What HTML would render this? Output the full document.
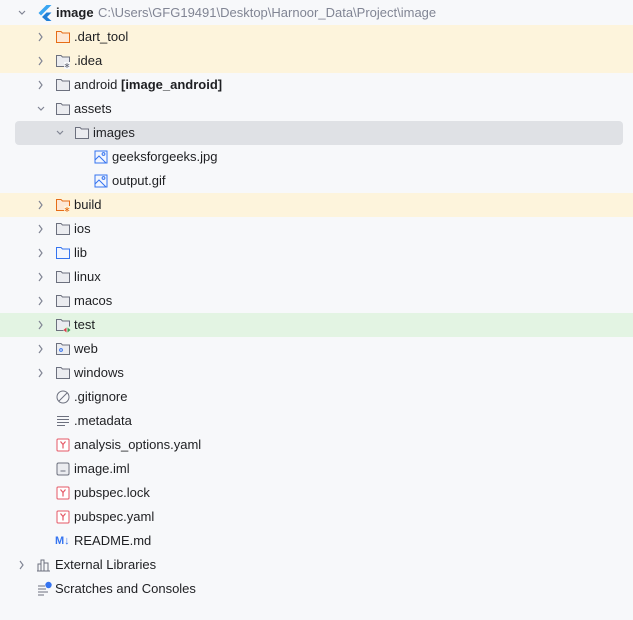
<!DOCTYPE html><html><head><style>
body{margin:0;width:633px;height:620px;background:#f7f8fa;font-family:"Liberation Sans",sans-serif;font-size:13px;color:#1e1f22;position:relative;overflow:hidden}
.r{position:absolute;left:0;width:633px;height:24px;line-height:24px;white-space:nowrap}
.r span.t{position:absolute;top:0}
.ch{position:absolute;top:7px;width:10px;height:10px}
.ic{position:absolute;top:4px;width:17px;height:16px}
.y{background:#fdf4dc}.g{background:#e3f4e3}
.sel{position:absolute;left:15px;top:121px;width:608px;height:24px;background:#dfe1e5;border-radius:4px}
</style></head><body>
<div class="r y" style="top:25px;height:48px"></div>
<div class="r y" style="top:193px"></div>
<div class="r g" style="top:313px"></div>
<div class="sel"></div>
<svg width="0" height="0" style="position:absolute"><defs>
<g id="cd"><path d="M2 3l3 3 3-3" fill="none" stroke="#818594" stroke-width="1.2"/></g>
<g id="cr"><path d="M3 1l3 4-3 4" fill="none" stroke="#818594" stroke-width="1.2"/></g>
<g id="fd"><path d="M1.5 2.5h4.5l1.5 1.5h7v9.5h-13z" fill="#ebecf0" stroke="#6c707e" stroke-width="1"/></g>
<g id="fo"><path d="M1.5 2.5h4.5l1.5 1.5h7v9.5h-13z" fill="#fde8d6" stroke="#e66d17" stroke-width="1"/></g>
<g id="fb"><path d="M1.5 2.5h4.5l1.5 1.5h7v9.5h-13z" fill="#f3f6fd" stroke="#3574f0" stroke-width="1"/></g>
<g id="img"><rect x="2" y="2" width="12" height="12" fill="#f3f6fd" stroke="#3574f0"/><circle cx="10.5" cy="5" r="1.4" fill="none" stroke="#3574f0"/><path d="M2 11l4-4 7 7" fill="none" stroke="#3574f0"/></g>
<g id="yml"><rect x="2" y="2" width="12" height="12" rx="1" fill="#fff" stroke="#e55765"/><path d="M5.5 4.5l2.5 3 2.5-3M8 7.5v4" fill="none" stroke="#e55765" stroke-width="1.2"/></g>
</defs></svg>

<div class="r" style="top:1px"><svg class="ch" style="left:17px" viewBox="0 0 10 10"><use href="#cd"/></svg>
<svg class="ic" style="left:36px;top:4px" viewBox="0 0 16 16"><path d="M10 0L2 8l2.5 2.5L15 0z" fill="#3aa6f2"/><path d="M10 7.5l-4.5 4.5 4.5 4h5l-4.5-4 4.5-4.5z" fill="#1f7ed6"/></svg>
<span class="t" style="left:56px;font-weight:bold">image</span><span class="t" style="left:98px;color:#818594">C:\Users\GFG19491\Desktop\Harnoor_Data\Project\image</span></div>

<div class="r" style="top:25px"><svg class="ch" style="left:36px" viewBox="0 0 10 10"><use href="#cr"/></svg><svg class="ic" style="left:55px" viewBox="0 0 17 16"><use href="#fo"/></svg><span class="t" style="left:74px">.dart_tool</span></div>
<div class="r" style="top:49px"><svg class="ch" style="left:36px" viewBox="0 0 10 10"><use href="#cr"/></svg><svg class="ic" style="left:55px" viewBox="0 0 17 16"><use href="#fd"/><rect x="9" y="9" width="6" height="7" fill="#f7f8fa"/><path d="M12 10v5M9.8 11.2l4.4 2.6M9.8 13.8l4.4-2.6" stroke="#6c707e" stroke-width=".8"/></svg><span class="t" style="left:74px">.idea</span></div>
<div class="r" style="top:73px"><svg class="ch" style="left:36px" viewBox="0 0 10 10"><use href="#cr"/></svg><svg class="ic" style="left:55px" viewBox="0 0 17 16"><use href="#fd"/></svg><span class="t" style="left:74px">android <b>[image_android]</b></span></div>
<div class="r" style="top:97px"><svg class="ch" style="left:36px" viewBox="0 0 10 10"><use href="#cd"/></svg><svg class="ic" style="left:55px" viewBox="0 0 17 16"><use href="#fd"/></svg><span class="t" style="left:74px">assets</span></div>
<div class="r" style="top:121px"><svg class="ch" style="left:55px" viewBox="0 0 10 10"><use href="#cd"/></svg><svg class="ic" style="left:74px" viewBox="0 0 17 16"><use href="#fd"/></svg><span class="t" style="left:93px">images</span></div>
<div class="r" style="top:145px"><svg class="ic" style="left:93px" viewBox="0 0 17 16"><use href="#img"/></svg><span class="t" style="left:112px">geeksforgeeks.jpg</span></div>
<div class="r" style="top:169px"><svg class="ic" style="left:93px" viewBox="0 0 17 16"><use href="#img"/></svg><span class="t" style="left:112px">output.gif</span></div>
<div class="r" style="top:193px"><svg class="ch" style="left:36px" viewBox="0 0 10 10"><use href="#cr"/></svg><svg class="ic" style="left:55px" viewBox="0 0 17 16"><use href="#fo"/><rect x="9" y="9" width="6" height="7" fill="#fdf4dc"/><path d="M12 10v5M9.8 11.2l4.4 2.6M9.8 13.8l4.4-2.6" stroke="#e66d17" stroke-width=".8"/></svg><span class="t" style="left:74px">build</span></div>
<div class="r" style="top:217px"><svg class="ch" style="left:36px" viewBox="0 0 10 10"><use href="#cr"/></svg><svg class="ic" style="left:55px" viewBox="0 0 17 16"><use href="#fd"/></svg><span class="t" style="left:74px">ios</span></div>
<div class="r" style="top:241px"><svg class="ch" style="left:36px" viewBox="0 0 10 10"><use href="#cr"/></svg><svg class="ic" style="left:55px" viewBox="0 0 17 16"><use href="#fb"/></svg><span class="t" style="left:74px">lib</span></div>
<div class="r" style="top:265px"><svg class="ch" style="left:36px" viewBox="0 0 10 10"><use href="#cr"/></svg><svg class="ic" style="left:55px" viewBox="0 0 17 16"><use href="#fd"/></svg><span class="t" style="left:74px">linux</span></div>
<div class="r" style="top:289px"><svg class="ch" style="left:36px" viewBox="0 0 10 10"><use href="#cr"/></svg><svg class="ic" style="left:55px" viewBox="0 0 17 16"><use href="#fd"/></svg><span class="t" style="left:74px">macos</span></div>
<div class="r" style="top:313px"><svg class="ch" style="left:36px" viewBox="0 0 10 10"><use href="#cr"/></svg><svg class="ic" style="left:55px" viewBox="0 0 17 16"><use href="#fd"/><rect x="8.5" y="9.5" width="7" height="6" fill="#e3f4e3"/><path d="M11.5 10.5l-3 2.5 3 2.5z" fill="#db3b4b"/><path d="M12.5 10.5l3 2.5-3 2.5z" fill="#3e9c52"/></svg><span class="t" style="left:74px">test</span></div>
<div class="r" style="top:337px"><svg class="ch" style="left:36px" viewBox="0 0 10 10"><use href="#cr"/></svg><svg class="ic" style="left:55px" viewBox="0 0 17 16"><use href="#fd"/><circle cx="6" cy="9" r="1.4" fill="none" stroke="#3574f0"/></svg><span class="t" style="left:74px">web</span></div>
<div class="r" style="top:361px"><svg class="ch" style="left:36px" viewBox="0 0 10 10"><use href="#cr"/></svg><svg class="ic" style="left:55px" viewBox="0 0 17 16"><use href="#fd"/></svg><span class="t" style="left:74px">windows</span></div>
<div class="r" style="top:385px"><svg class="ic" style="left:55px" viewBox="0 0 17 16"><circle cx="8" cy="8" r="6" fill="none" stroke="#6c707e"/><path d="M4 12l8-8" stroke="#6c707e"/></svg><span class="t" style="left:74px">.gitignore</span></div>
<div class="r" style="top:409px"><svg class="ic" style="left:55px" viewBox="0 0 17 16"><path d="M2 3.5h12M2 6.5h12M2 9.5h12M2 12.5h8" stroke="#6c707e"/></svg><span class="t" style="left:74px">.metadata</span></div>
<div class="r" style="top:433px"><svg class="ic" style="left:55px" viewBox="0 0 17 16"><use href="#yml"/></svg><span class="t" style="left:74px">analysis_options.yaml</span></div>
<div class="r" style="top:457px"><svg class="ic" style="left:55px" viewBox="0 0 17 16"><rect x="2" y="2" width="12" height="12" rx="1.5" fill="#ebecf0" stroke="#6c707e"/><path d="M5.5 10h5" stroke="#6c707e"/></svg><span class="t" style="left:74px">image.iml</span></div>
<div class="r" style="top:481px"><svg class="ic" style="left:55px" viewBox="0 0 17 16"><use href="#yml"/></svg><span class="t" style="left:74px">pubspec.lock</span></div>
<div class="r" style="top:505px"><svg class="ic" style="left:55px" viewBox="0 0 17 16"><use href="#yml"/></svg><span class="t" style="left:74px">pubspec.yaml</span></div>
<div class="r" style="top:529px"><span class="t" style="left:55px;color:#3574f0;font-weight:bold;font-size:11px">M↓</span><span class="t" style="left:74px">README.md</span></div>
<div class="r" style="top:553px"><svg class="ch" style="left:17px" viewBox="0 0 10 10"><use href="#cr"/></svg><svg class="ic" style="left:36px" viewBox="0 0 17 16"><path d="M2 14V7h3v7M5 14V3h3v11M8 14V6h4v8M1 14h13" fill="none" stroke="#6c707e"/></svg><span class="t" style="left:55px">External Libraries</span></div>
<div class="r" style="top:577px"><svg class="ic" style="left:36px" viewBox="0 0 17 16"><path d="M2 5h7M2 8h8M2 11h10M2 14h6" stroke="#6c707e"/><circle cx="12.5" cy="4" r="3.2" fill="#3574f0"/></svg><span class="t" style="left:55px">Scratches and Consoles</span></div>
</body></html>
